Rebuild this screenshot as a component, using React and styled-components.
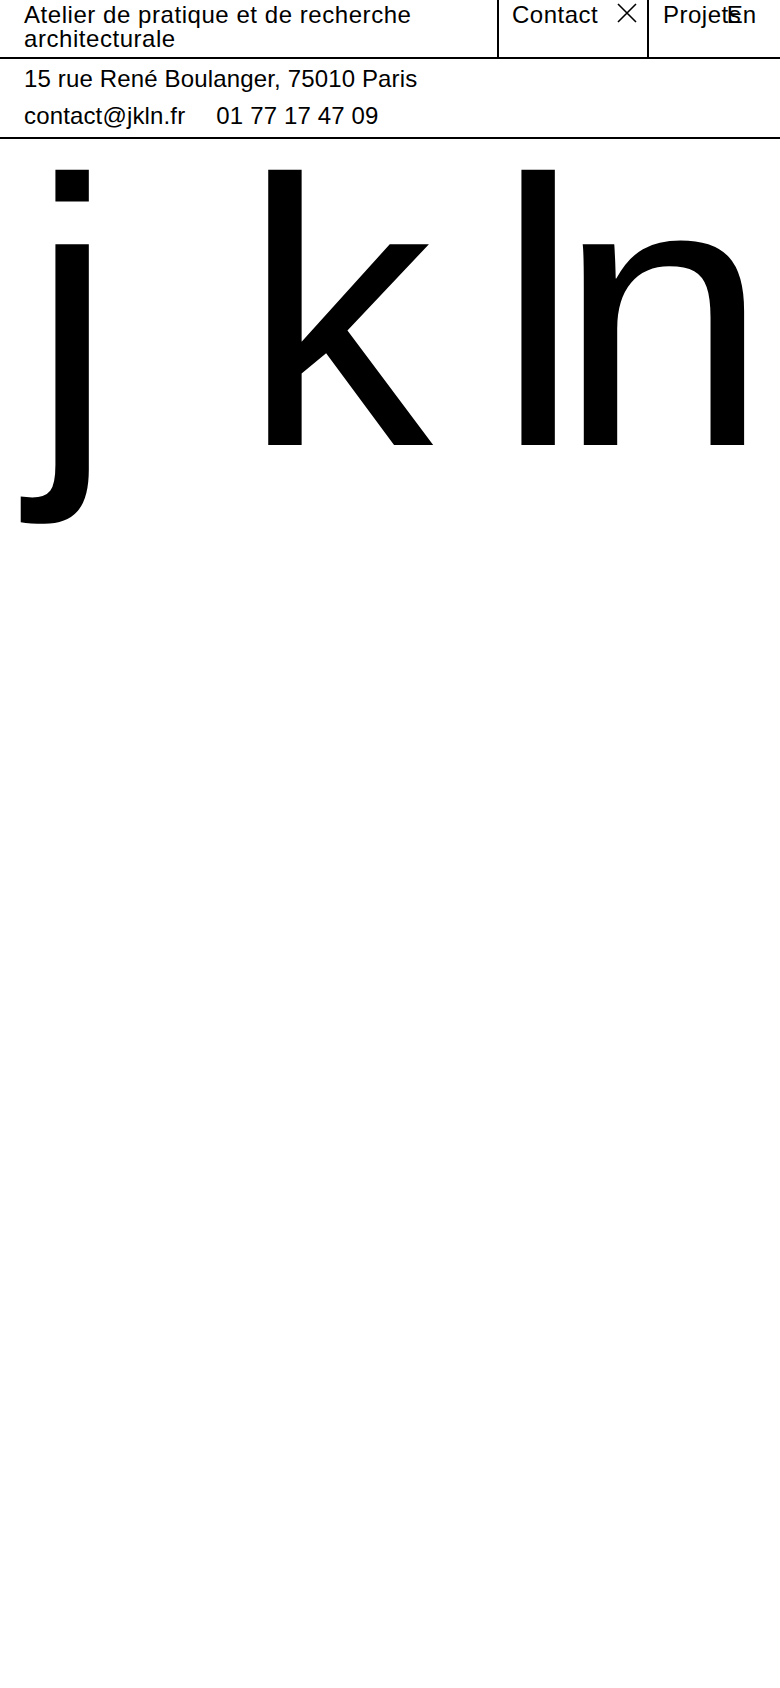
import styled, { createGlobalStyle } from 'styled-components'

const GlobalStyle = createGlobalStyle`
  html, body {
    margin: 0;
    padding: 0;
    background: #fff;
  }
  body {
    font-family: "Liberation Sans", Arial, Helvetica, sans-serif;
    color: #000;
    -webkit-font-smoothing: antialiased;
  }
  * { box-sizing: border-box; }
`

const CloseIcon = () => (
  <svg width="20" height="20" viewBox="0 0 20 20" fill="none">
    <path d="M1 1 L19 19 M19 1 L1 19" stroke="#000" strokeWidth="1.6" />
  </svg>
)

const App = () => {
  return (
    <Page>
      <GlobalStyle />
      <Header>
        <Intro>Atelier de pratique et de recherche architecturale</Intro>
        <ContactCell>
          <NavLink>Contact</NavLink>
          <CloseButton aria-label="Fermer">
            <CloseIcon />
          </CloseButton>
        </ContactCell>
        <NavCell>
          <NavLink>Projets</NavLink>
          <LangLink>En</LangLink>
        </NavCell>
      </Header>
      <Info>
        <InfoLine>15 rue René Boulanger, 75010 Paris</InfoLine>
        <InfoLine>
          <span>contact@jkln.fr</span>
          <span>01 77 17 47 09</span>
        </InfoLine>
      </Info>
      <Logo aria-label="jkln">
        <Glyph $offset={30}>j</Glyph>
        <Glyph $offset={151}>k</Glyph>
        <Glyph $offset={86}>ln</Glyph>
      </Logo>
    </Page>
  )
}
export default App

const Page = styled.div`
  min-height: 1688px;
  background: #fff;
`

const Header = styled.header`
  display: grid;
  grid-template-columns: 497px 150px 1fr;
  border-bottom: 2px solid #000;
  font-size: 24px;
  line-height: 24px;
`

const Intro = styled.div`
  padding: 3px 24px 6px;
  letter-spacing: 0.55px;
`

const ContactCell = styled.div`
  display: flex;
  justify-content: space-between;
  align-items: flex-start;
  border-left: 2px solid #000;
  padding: 3px 10px 0 13px;
`

const NavLink = styled.span`
  letter-spacing: 0.5px;
`

const CloseButton = styled.span`
  display: flex;
`

const NavCell = styled.div`
  display: grid;
  grid-template-areas: 'stack';
  align-items: start;
  border-left: 2px solid #000;
  padding: 3px 24px 0 14px;

  & > * {
    grid-area: stack;
  }
`

const LangLink = styled.span`
  justify-self: end;
`

const Info = styled.section`
  display: flex;
  flex-direction: column;
  gap: 13px;
  padding: 8px 24px 9px;
  border-bottom: 2px solid #000;
  font-size: 24px;
  line-height: 24px;
  letter-spacing: 0.15px;
`

const InfoLine = styled.div`
  display: flex;
  gap: 31px;
`

const Logo = styled.div`
  display: flex;
  align-items: baseline;
  font-size: 380px;
  line-height: 350px;
  letter-spacing: -0.06em;
  white-space: nowrap;
`

const Glyph = styled.span`
  margin-left: ${p => p.$offset}px;
`
